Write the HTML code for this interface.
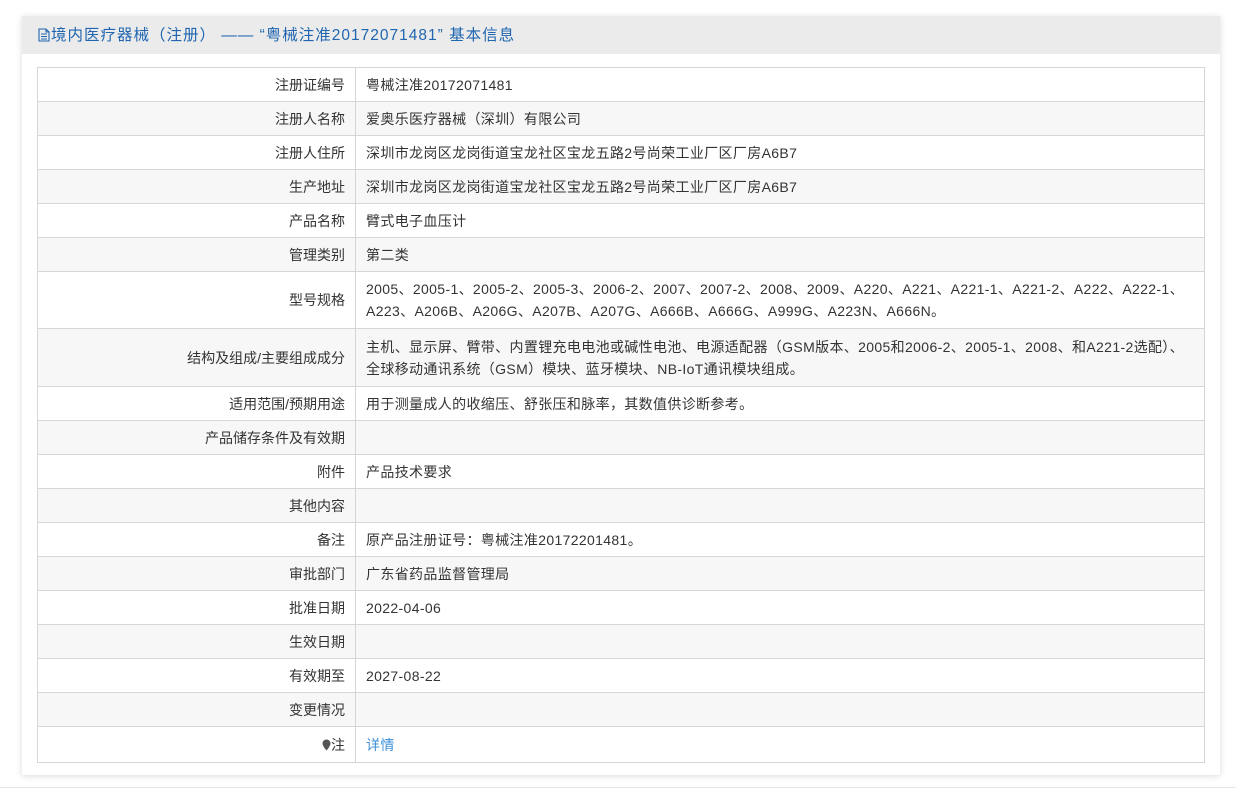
<!DOCTYPE html>
<html><head><meta charset="utf-8"><style>
body{margin:0;background:#fff;font-family:"Liberation Sans","Noto Sans CJK SC",sans-serif;font-size:14px;color:#333;width:1236px;height:795px;overflow:hidden;position:relative}
.panel{position:absolute;left:22px;top:16px;width:1198px;height:759px;background:#fff;box-shadow:0 1px 6px rgba(0,0,0,.15)}
.hd{height:38px;background:#ebebeb;color:#1f65b0;font-size:15.5px;line-height:40px;padding-left:16px;letter-spacing:1px}
.hd svg{vertical-align:-2px;margin-right:1px}
table{position:absolute;left:15px;top:51px;width:1168px;border-collapse:collapse}
td{border:1px solid #d6d6d6;padding:0 10px;line-height:22px;letter-spacing:0.35px}
td.l{width:297px;text-align:right;letter-spacing:0}
tr:nth-child(even){background:#f7f7f7}
.ln{position:absolute;left:0;top:787px;width:1236px;border-top:1px solid #e5e5e5}
</style></head><body>
<div class="panel">
<div class="hd"><svg width="12" height="14" viewBox="0 0 12 14"><path d="M1 1h7l3 3v9H1z M8 1v3h3 M3 6h6 M3 8.5h6 M3 11h6" fill="none" stroke="#1f65b0" stroke-width="1.1"/></svg>境内医疗器械（注册） —— “粤械注准20172071481” 基本信息</div>
<table>
<tr style="height:34px"><td class="l">注册证编号</td><td>粤械注准20172071481</td></tr>
<tr style="height:34px"><td class="l">注册人名称</td><td>爱奥乐医疗器械（深圳）有限公司</td></tr>
<tr style="height:34px"><td class="l">注册人住所</td><td>深圳市龙岗区龙岗街道宝龙社区宝龙五路2号尚荣工业厂区厂房A6B7</td></tr>
<tr style="height:34px"><td class="l">生产地址</td><td>深圳市龙岗区龙岗街道宝龙社区宝龙五路2号尚荣工业厂区厂房A6B7</td></tr>
<tr style="height:34px"><td class="l">产品名称</td><td>臂式电子血压计</td></tr>
<tr style="height:34px"><td class="l">管理类别</td><td>第二类</td></tr>
<tr style="height:57px"><td class="l">型号规格</td><td>2005、2005-1、2005-2、2005-3、2006-2、2007、2007-2、2008、2009、A220、A221、A221-1、A221-2、A222、A222-1、<br>A223、A206B、A206G、A207B、A207G、A666B、A666G、A999G、A223N、A666N。</td></tr>
<tr style="height:58px"><td class="l">结构及组成/主要组成成分</td><td>主机、显示屏、臂带、内置锂充电电池或碱性电池、电源适配器（GSM版本、2005和2006-2、2005-1、2008、和A221-2选配）、<br>全球移动通讯系统（GSM）模块、蓝牙模块、NB-IoT通讯模块组成。</td></tr>
<tr style="height:34px"><td class="l">适用范围/预期用途</td><td>用于测量成人的收缩压、舒张压和脉率，其数值供诊断参考。</td></tr>
<tr style="height:34px"><td class="l">产品储存条件及有效期</td><td></td></tr>
<tr style="height:34px"><td class="l">附件</td><td>产品技术要求</td></tr>
<tr style="height:34px"><td class="l">其他内容</td><td></td></tr>
<tr style="height:34px"><td class="l">备注</td><td>原产品注册证号：粤械注准20172201481。</td></tr>
<tr style="height:34px"><td class="l">审批部门</td><td>广东省药品监督管理局</td></tr>
<tr style="height:34px"><td class="l">批准日期</td><td>2022-04-06</td></tr>
<tr style="height:34px"><td class="l">生效日期</td><td></td></tr>
<tr style="height:34px"><td class="l">有效期至</td><td>2027-08-22</td></tr>
<tr style="height:34px"><td class="l">变更情况</td><td></td></tr>
<tr style="height:36px"><td class="l"><svg width="9" height="12" viewBox="0 0 9 12" style="vertical-align:-1px"><path d="M4.5 0.5a4 4 0 0 1 4 4c0 2.5-4 7-4 7s-4-4.5-4-7a4 4 0 0 1 4-4z" fill="#555"/></svg>注</td><td style="color:#3d8fd8">详情</td></tr>
</table>
</div>
<div class="ln"></div>
</body></html>
